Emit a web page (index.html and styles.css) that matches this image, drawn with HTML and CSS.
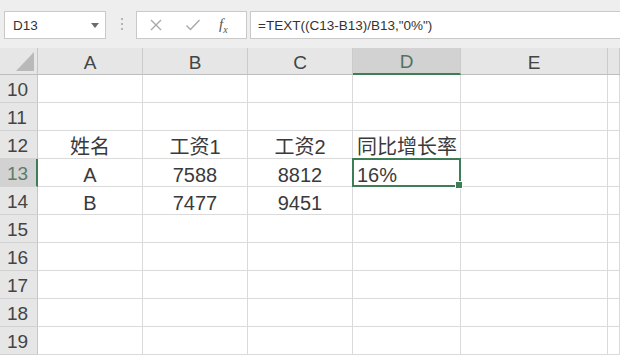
FILE: index.html
```html
<!DOCTYPE html>
<html lang="zh-CN">
<head>
    <meta charset="UTF-8">
    <title>Sheet</title>
    <link rel="stylesheet" href="styles.css">
</head>
<body>
    <div class="toolbar">
        <div class="namebox">
            <span>D13</span>
            <svg class="drop" width="8" height="5" viewBox="0 0 8 5"><path d="M0 0H8L4 5Z" fill="#6b6b6b"/></svg>
        </div>
        <div class="grip"><i></i><i></i><i></i></div>
        <div class="fxbox">
            <svg width="14" height="14" viewBox="0 0 14 14"><path d="M2 2L12 12M12 2L2 12" stroke="#a8a8a8" stroke-width="1.4" fill="none"/></svg>
            <svg width="16" height="14" viewBox="0 0 16 14"><path d="M1.5 7.5L5.5 11.5L14.5 2" stroke="#a8a8a8" stroke-width="1.4" fill="none"/></svg>
            <span class="fx"><i>f</i><sub>x</sub></span>
        </div>
        <div class="formula">=TEXT((C13-B13)/B13,"0%")</div>
    </div>

    <div class="sheet">
        <div class="corner">
            <svg width="18" height="19" viewBox="0 0 18 19"><path d="M18 0V19H0Z" fill="#b9b9b9"/></svg>
        </div>
        <div class="colhead">A</div>
        <div class="colhead">B</div>
        <div class="colhead">C</div>
        <div class="colhead sel">D</div>
        <div class="colhead">E</div>
        <div class="colhead"></div>

        <div class="rowhead">10</div>
        <div class="cell"></div><div class="cell"></div><div class="cell"></div><div class="cell"></div><div class="cell"></div><div class="cell"></div>

        <div class="rowhead">11</div>
        <div class="cell"></div><div class="cell"></div><div class="cell"></div><div class="cell"></div><div class="cell"></div><div class="cell"></div>

        <div class="rowhead">12</div>
        <div class="cell center">姓名</div>
        <div class="cell center">工资1</div>
        <div class="cell center">工资2</div>
        <div class="cell">同比增长率</div>
        <div class="cell"></div><div class="cell"></div>

        <div class="rowhead sel">13</div>
        <div class="cell center">A</div>
        <div class="cell center">7588</div>
        <div class="cell center">8812</div>
        <div class="cell active">16%</div>
        <div class="cell"></div><div class="cell"></div>

        <div class="rowhead">14</div>
        <div class="cell center">B</div>
        <div class="cell center">7477</div>
        <div class="cell center">9451</div>
        <div class="cell"></div><div class="cell"></div><div class="cell"></div>

        <div class="rowhead">15</div>
        <div class="cell"></div><div class="cell"></div><div class="cell"></div><div class="cell"></div><div class="cell"></div><div class="cell"></div>

        <div class="rowhead">16</div>
        <div class="cell"></div><div class="cell"></div><div class="cell"></div><div class="cell"></div><div class="cell"></div><div class="cell"></div>

        <div class="rowhead">17</div>
        <div class="cell"></div><div class="cell"></div><div class="cell"></div><div class="cell"></div><div class="cell"></div><div class="cell"></div>

        <div class="rowhead">18</div>
        <div class="cell"></div><div class="cell"></div><div class="cell"></div><div class="cell"></div><div class="cell"></div><div class="cell"></div>

        <div class="rowhead">19</div>
        <div class="cell"></div><div class="cell"></div><div class="cell"></div><div class="cell"></div><div class="cell"></div><div class="cell"></div>
    </div>
</body>
</html>
```

FILE: styles.css
```css
* {
    box-sizing: border-box;
}
body {
    margin: 0;
    width: 620px;
    height: 355px;
    overflow: hidden;
    background-color: #fff;
    font-family: "Liberation Sans", "Noto Sans CJK SC", sans-serif;
    color: #3a3a3a;
}
.toolbar {
    display: flex;
    align-items: flex-start;
    height: 48px;
    padding: 11px 0 0 4px;
    background-color: #eeeeee;
}
.namebox {
    display: flex;
    align-items: center;
    justify-content: space-between;
    width: 102px;
    height: 28px;
    padding: 0 6px 0 8px;
    background-color: #fff;
    border: 1px solid #c9c9c9;
    font-size: 13.5px;
    color: #333;
}
.grip {
    display: flex;
    flex-direction: column;
    gap: 3px;
    padding: 7px 0 0;
    margin: 0 13px 0 15px;
}
.grip i {
    width: 2px;
    height: 2px;
    background-color: #b4b4b4;
}
.fxbox {
    display: flex;
    align-items: center;
    width: 111px;
    height: 28px;
    padding: 0 0 0 12px;
    gap: 22px;
    background-color: #fff;
    border: 1px solid #c9c9c9;
}
.fx {
    font-family: "Liberation Serif", serif;
    font-size: 15px;
    color: #555;
    margin-left: -4px;
}
.fx sub {
    font-size: 10px;
    font-style: italic;
}
.formula {
    flex: 1;
    height: 28px;
    margin-left: 3px;
    padding: 0 7px;
    display: flex;
    align-items: center;
    background-color: #fff;
    border: 1px solid #c9c9c9;
    border-right: none;
    font-size: 13.5px;
    color: #333;
}
.sheet {
    display: grid;
    grid-template-columns: 38px 105px 105px 105px 108px 147px 1fr;
    grid-template-rows: 27px;
    grid-auto-rows: 28px;
}
.corner {
    display: flex;
    align-items: flex-end;
    justify-content: flex-end;
    padding: 0 3px 3px 0;
    background-color: #e6e6e6;
    border-right: 1px solid #c6c6c6;
    border-bottom: 1px solid #bdbdbd;
}
.colhead {
    display: flex;
    align-items: center;
    justify-content: center;
    padding-top: 3px;
    background-color: #e6e6e6;
    border-right: 1px solid #cbcbcb;
    border-bottom: 1px solid #bdbdbd;
    font-size: 19px;
    color: #444;
}
.colhead.sel {
    background-color: #d2d2d2;
    border-bottom: 2px solid #3f7d57;
    color: #55705f;
}
.rowhead {
    display: flex;
    align-items: center;
    padding: 2px 0 0 7px;
    background-color: #e6e6e6;
    border-right: 1px solid #c6c6c6;
    border-bottom: 1px solid #d2d2d2;
    font-size: 19px;
    color: #444;
}
.rowhead.sel {
    background-color: #d2d2d2;
    border-right: 2px solid #3f7d57;
    color: #5b7d68;
}
.cell {
    display: flex;
    align-items: flex-end;
    padding: 0 4px 1px;
    border-right: 1px solid #dadada;
    border-bottom: 1px solid #dadada;
    font-size: 20px;
    line-height: 1;
    white-space: nowrap;
}
.center {
    justify-content: center;
}
.active {
    position: relative;
}
.active::after {
    content: "";
    position: absolute;
    left: -1px;
    top: -1px;
    right: -1px;
    bottom: -1px;
    border: 2px solid #3f7d57;
}
.active::before {
    content: "";
    position: absolute;
    right: -3px;
    bottom: -3px;
    width: 6px;
    height: 6px;
    background-color: #3f7d57;
    border: 1px solid #fff;
    z-index: 1;
}
```
